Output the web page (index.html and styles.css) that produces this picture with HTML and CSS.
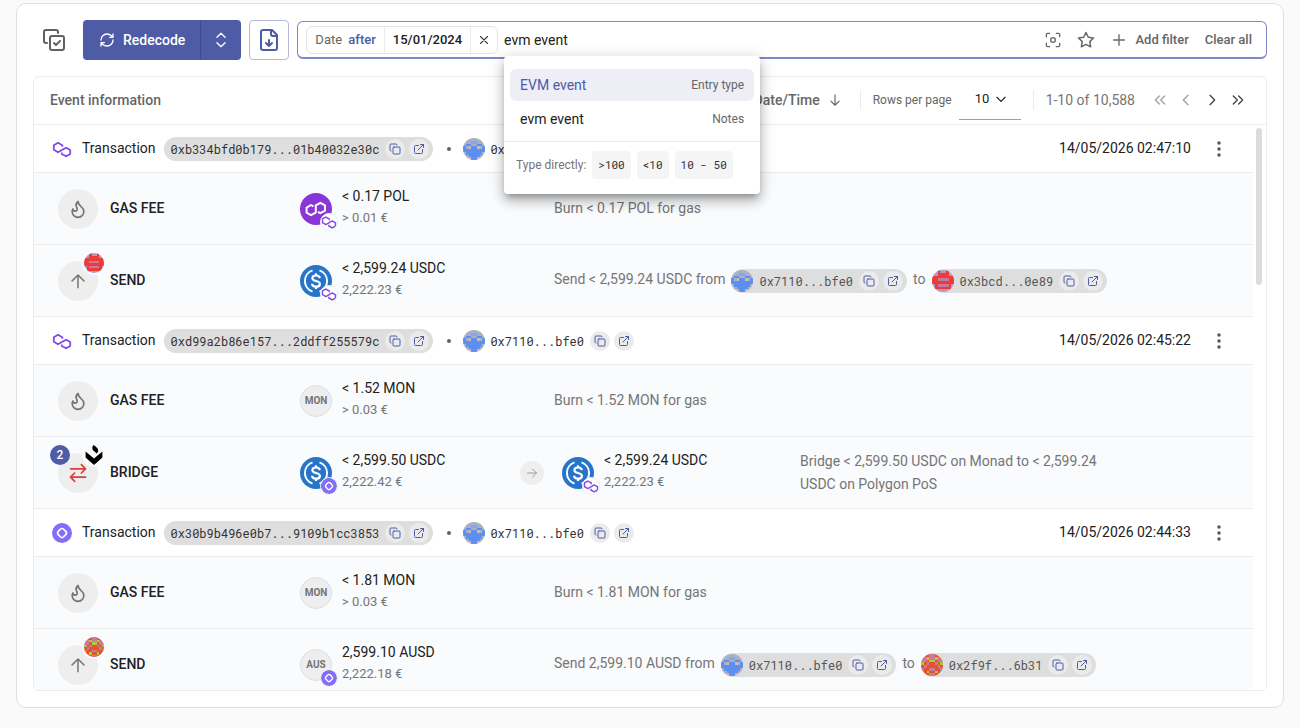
FILE: index.html
```html
<!DOCTYPE html>
<html lang="en">
<head>
<meta charset="utf-8">
<meta name="viewport" content="width=device-width, initial-scale=1">
<title>History events</title>
<link rel="stylesheet" href="styles.css">
</head>
<body>
<svg class="sprite" aria-hidden="true">
  <symbol id="copy" viewBox="0 0 24 24"><rect x="8" y="8" width="14" height="14" rx="2"/><path d="M4 16a2 2 0 0 1-2-2V4a2 2 0 0 1 2-2h10a2 2 0 0 1 2 2"/></symbol>
  <symbol id="link" viewBox="0 0 24 24"><path d="M15 3h6v6M10 14 21 3M19 13v6a2 2 0 0 1-2 2H5a2 2 0 0 1-2-2V7a2 2 0 0 1 2-2h6"/></symbol>
  <symbol id="flame" viewBox="0 0 24 24"><path d="M8.500 14.500A2.500 2.500 0 0 0 11 12c0-1.380-.5-2-1-3-1.072-2.143-.224-4.054 2-6 .5 2.500 2 4.900 4 6.500 2 1.600 3 3.500 3 5.500a7 7 0 1 1-14 0c0-1.153.433-2.294 1-3a2.500 2.500 0 0 0 2.500 2.500z"/></symbol>
  <symbol id="up" viewBox="0 0 24 24"><path d="m4 12 8-8 8 8M12 21V4"/></symbol>
  <symbol id="more" viewBox="0 0 24 24"><g fill="currentColor" stroke="none"><circle cx="12" cy="4" r="2.300"/><circle cx="12" cy="12" r="2.300"/><circle cx="12" cy="20" r="2.300"/></g></symbol>
  <symbol id="polygon" viewBox="0 0 20 20"><path d="M10.300 7.800V6.200L6 3.800 1.800 6.200v4.600L6 13.200l8-4.500 4.200 2.300v4L14 17.300 9.800 15v-1.600" fill="none" stroke="#8247e5" stroke-width="1.800" stroke-linejoin="round"/></symbol>
  <symbol id="monad" viewBox="0 0 20 20"><circle cx="10" cy="10" r="10" fill="#836ef9"/><rect x="6.200" y="6.200" width="7.600" height="7.600" rx="2.300" transform="rotate(45 10 10)" fill="none" stroke="#fff" stroke-width="1.700"/></symbol>
  <symbol id="pol" viewBox="0 0 32 32"><circle cx="16" cy="16" r="16" fill="#8a35d8"/><path d="M13.500 13.400 11 12l-4.400 2.600v5l4.400 2.600 4.800-2.600v-7.200l4.600-2.600 4.600 2.600v5.200l-4.600 2.600-2.400-1.400" fill="none" stroke="#fff" stroke-width="2" stroke-linejoin="round"/></symbol>
  <symbol id="usdc" viewBox="0 0 32 32"><circle cx="16" cy="16" r="16" fill="#2775ca"/><g fill="none" stroke="#fff" stroke-width="2"><path d="M12.500 5.400a11.200 11.200 0 0 0 0 21.200M19.500 5.400a11.200 11.200 0 0 1 0 21.200"/><path d="M19.800 13.200c-.2-1.900-1.600-2.700-3.700-2.700-2.300 0-3.700 1-3.700 2.700 0 3.900 7.500 1.700 7.500 5.700 0 1.800-1.500 2.800-3.900 2.800-2.300 0-3.800-1-3.900-3M16 8.200v2.500M16 21.500v2.600" stroke-width="2.200"/></g></symbol>
  <symbol id="blockie-blue" viewBox="0 0 8 8"><g shape-rendering="crispEdges"><path fill="#aab0c3" d="M0 0h8v8H0z"/><path fill="#5b8ff0" d="M1 2h2v1H1zM5 2h2v1H5zM0 3h1v1H0zM7 3h1v1H7zM3 3h2v1H3zM0 4h8v1H0zM1 5h6v1H1zM2 6h4v1H2zM3 7h2v1H3z"/><path fill="#7fa8f4" d="M3 1h2v1H3z"/><path fill="#dcb4ae" d="M0 6h1v1H0zM7 6h1v1H7zM2 3h1v1H2zM5 3h1v1H5zM1 7h2v1H1zM5 7h2v1H5z"/></g></symbol>
  <symbol id="blockie-red" viewBox="0 0 8 8"><g shape-rendering="crispEdges"><path fill="#ae98d2" d="M0 0h8v8H0z"/><path fill="#ef3b38" d="M2 0h1v1H2zM5 0h1v1H5zM2 1h4v1H2zM0 2h8v1H0zM1 3h1v4H1zM6 3h1v4H6zM0 3h1v2H0zM7 3h1v2H7zM2 4h4v1H2zM2 6h4v1H2z"/><path fill="#ca779c" d="M2 3h4v1H2zM2 5h4v1H2z"/></g></symbol>
  <symbol id="blockie-orange" viewBox="0 0 8 8"><g shape-rendering="crispEdges"><path fill="#e25429" d="M0 0h8v8H0z"/><path fill="#d0799e" d="M3 0h2v2H3zM1 1h1v1H1zM6 1h1v1H6zM0 2h2v1H0zM6 2h2v1H6zM2 3h1v1H2zM5 3h1v1H5zM1 4h1v1H1zM6 4h1v1H6zM3 5h2v1H3zM0 5h1v1H0zM7 5h1v1H7zM3 7h2v1H3z"/><path fill="#a4cf3e" d="M2 1h1v1H2zM5 1h1v1H5zM3 2h2v1H3zM0 3h1v1H0zM7 3h1v1H7zM2 6h1v1H2zM5 6h1v1H5z"/></g></symbol>
</svg>

<main class="card">
  <div class="toolbar">
    <button class="select-toggle" aria-label="Select events"><svg class="i i24" viewBox="0 0 24 24"><rect x="8" y="8" width="14" height="14" rx="2"/><path d="M5 15H4a2 2 0 0 1-2-2V4a2 2 0 0 1 2-2h10a2 2 0 0 1 2 2v1M12 15l2 2 4-4"/></svg></button>
    <div class="split">
      <button class="split-main"><svg class="i i16" viewBox="0 0 24 24"><path d="M3 12a9 9 0 0 1 9-9 9.750 9.750 0 0 1 6.740 2.740L21 8M21 3v5h-5M21 12a9 9 0 0 1-9 9 9.750 9.750 0 0 1-6.740-2.740L3 16M8 16H3v5"/></svg>Redecode</button>
      <button class="split-more" aria-label="More decode options"><svg class="i i16" viewBox="0 0 24 24"><path d="m6 16 6 6 6-6M6 8l6-6 6 6"/></svg></button>
    </div>
    <button class="export" aria-label="Export"><svg class="i i24" viewBox="0 0 24 24"><path d="M15 2H6a2 2 0 0 0-2 2v16a2 2 0 0 0 2 2h12a2 2 0 0 0 2-2V7zM14 2v4a2 2 0 0 0 2 2h4M12 18v-6M9 15l3 3 3-3"/></svg></button>

    <div class="filter">
      <div class="chip">
        <span class="chip-key">Date <b>after</b></span>
        <span class="chip-value">15/01/2024</span>
        <button class="chip-remove" aria-label="Remove filter"><svg class="i i14" viewBox="0 0 24 24"><path d="M18 6 6 18M6 6l12 12"/></svg></button>
      </div>
      <div class="search">
        <input type="text" value="evm event" aria-label="Filter events">
        <div class="menu">
          <div class="options" role="listbox" aria-label="Suggestions">
            <button class="option active" role="option" aria-selected="true"><span>EVM event</span><small>Entry type</small></button>
            <button class="option" role="option" aria-selected="false"><span>evm event</span><small>Notes</small></button>
          </div>
          <div class="hint"><span>Type directly:</span><kbd>&gt;100</kbd><kbd>&lt;10</kbd><kbd>10 - 50</kbd></div>
        </div>
      </div>
      <button class="tool" aria-label="Match exactly"><svg class="i i16" viewBox="0 0 24 24"><circle cx="12" cy="12" r="3.500"/><path d="M2 7V4a2 2 0 0 1 2-2h3M17 2h3a2 2 0 0 1 2 2v3M22 17v3a2 2 0 0 1-2 2h-3M7 22H4a2 2 0 0 1-2-2v-3"/></svg></button>
      <button class="tool" aria-label="Saved filters"><svg class="i i18" viewBox="0 0 24 24"><path d="m12 2 3.100 6.300 6.900 1-5 4.900 1.200 6.900L12 17.800l-6.200 3.300L7 14.200 2 9.300l6.900-1z"/></svg></button>
      <button class="tool add"><svg class="i i16" viewBox="0 0 24 24"><path d="M4 12h16M12 4v16"/></svg>Add filter</button>
      <button class="tool">Clear all</button>
    </div>
  </div>

  <section class="events">
    <header class="head">
      <h2>Event information</h2>
      <button class="sort">Date/Time<svg class="i i14" viewBox="0 0 24 24"><path d="M12 3v18M5 14l7 7 7-7"/></svg></button>
      <div class="pager">
        <label for="rows">Rows per page</label>
        <span class="rows"><select id="rows"><option>10</option></select><svg class="i i14" viewBox="0 0 24 24"><path d="m5 9 7 7 7-7"/></svg></span>
        <span class="range">1-10 of 10,588</span>
        <nav class="pages" aria-label="Pages">
          <button disabled aria-label="First page"><svg class="i i16" viewBox="0 0 24 24"><path d="m11 18-6-6 6-6M19 18l-6-6 6-6"/></svg></button>
          <button disabled aria-label="Previous page"><svg class="i i16" viewBox="0 0 24 24"><path d="m15 19-7-7 7-7"/></svg></button>
          <button aria-label="Next page"><svg class="i i16" viewBox="0 0 24 24"><path d="m9 19 7-7-7-7"/></svg></button>
          <button aria-label="Last page"><svg class="i i16" viewBox="0 0 24 24"><path d="m5 18 6-6-6-6M13 18l6-6-6-6"/></svg></button>
        </nav>
      </div>
    </header>

    <div class="scroll">
      <table aria-label="Events">
        <colgroup><col class="c-event"><col class="c-asset"><col class="c-note"><col></colgroup>
        <tbody>
          <tr class="tx">
            <td colspan="3"><div class="tx-line">
              <svg class="chain"><use href="#polygon"/></svg><span class="tx-label">Transaction</span>
              <span class="address hash"><code>0xb334bfd0b179...01b40032e30c</code><button aria-label="Copy"><svg class="i i12"><use href="#copy"/></svg></button><a href="#tx1" aria-label="Open"><svg class="i i12"><use href="#link"/></svg></a></span>
              <span class="dot"></span>
              <span class="address plain"><svg class="blockie"><use href="#blockie-blue"/></svg><code>0x7110...bfe0</code><button aria-label="Copy"><svg class="i i12"><use href="#copy"/></svg></button><a href="#a1" aria-label="Open"><svg class="i i12"><use href="#link"/></svg></a></span>
            </div></td>
            <td><div class="tx-end"><time>14/05/2026 02:47:10</time><button class="more" aria-label="Actions"><svg class="i i18"><use href="#more"/></svg></button></div></td>
          </tr>
          <tr class="ev">
            <td><div class="event"><span class="disc"><svg class="i i20"><use href="#flame"/></svg></span><span class="name">GAS FEE</span></div></td>
            <td><div class="asset"><span class="coin"><svg class="coin-img"><use href="#pol"/></svg><svg class="net light"><use href="#polygon"/></svg></span><span class="amount">&lt; 0.17 POL<small>&gt; 0.01 €</small></span></div></td>
            <td colspan="2"><p class="note">Burn &lt; 0.17 POL for gas</p></td>
          </tr>
          <tr class="ev">
            <td><div class="event"><span class="disc"><svg class="i i18"><use href="#up"/></svg><svg class="party"><use href="#blockie-red"/></svg></span><span class="name">SEND</span></div></td>
            <td><div class="asset"><span class="coin"><svg class="coin-img"><use href="#usdc"/></svg><svg class="net light"><use href="#polygon"/></svg></span><span class="amount">&lt; 2,599.24 USDC<small>2,222.23 €</small></span></div></td>
            <td colspan="2"><p class="note flow"><span class="word">Send &lt; 2,599.24 USDC from</span>
              <span class="address"><svg class="blockie"><use href="#blockie-blue"/></svg><code>0x7110...bfe0</code><button aria-label="Copy"><svg class="i i12"><use href="#copy"/></svg></button><a href="#a1" aria-label="Open"><svg class="i i12"><use href="#link"/></svg></a></span> <span class="word">to</span>
              <span class="address"><svg class="blockie"><use href="#blockie-red"/></svg><code>0x3bcd...0e89</code><button aria-label="Copy"><svg class="i i12"><use href="#copy"/></svg></button><a href="#a2" aria-label="Open"><svg class="i i12"><use href="#link"/></svg></a></span></p></td>
          </tr>

          <tr class="tx">
            <td colspan="3"><div class="tx-line">
              <svg class="chain"><use href="#polygon"/></svg><span class="tx-label">Transaction</span>
              <span class="address hash"><code>0xd99a2b86e157...2ddff255579c</code><button aria-label="Copy"><svg class="i i12"><use href="#copy"/></svg></button><a href="#tx2" aria-label="Open"><svg class="i i12"><use href="#link"/></svg></a></span>
              <span class="dot"></span>
              <span class="address plain"><svg class="blockie"><use href="#blockie-blue"/></svg><code>0x7110...bfe0</code><button aria-label="Copy"><svg class="i i12"><use href="#copy"/></svg></button><a href="#a1" aria-label="Open"><svg class="i i12"><use href="#link"/></svg></a></span>
            </div></td>
            <td><div class="tx-end"><time>14/05/2026 02:45:22</time><button class="more" aria-label="Actions"><svg class="i i18"><use href="#more"/></svg></button></div></td>
          </tr>
          <tr class="ev">
            <td><div class="event"><span class="disc"><svg class="i i20"><use href="#flame"/></svg></span><span class="name">GAS FEE</span></div></td>
            <td><div class="asset"><span class="coin text">MON</span><span class="amount">&lt; 1.52 MON<small>&gt; 0.03 €</small></span></div></td>
            <td colspan="2"><p class="note">Burn &lt; 1.52 MON for gas</p></td>
          </tr>
          <tr class="ev">
            <td><div class="event"><span class="disc swap"><svg class="i i20" viewBox="0 0 24 24"><path d="M3 7h18M16 2l5 5-5 5M21 17H3M8 12l-5 5 5 5"/></svg><span class="count">2</span><svg class="party protocol" viewBox="0 0 20 20"><path d="M9.400 0c2.200 1.400 4.800 3.200 4.800 5.400 0 1.400-.8 2.200-1.800 3-.8-1.600-3.900-2.600-4.100-4.900C8.200 2.200 8.700 1 9.400 0zM1.600 6.400 10 13.400l8.400-7v6L10 20l-8.400-7.600z" fill="#000"/></svg></span><span class="name">BRIDGE</span></div></td>
            <td colspan="2"><div class="bridge">
              <div class="asset"><span class="coin"><svg class="coin-img"><use href="#usdc"/></svg><svg class="net"><use href="#monad"/></svg></span><span class="amount">&lt; 2,599.50 USDC<small>2,222.42 €</small></span></div>
              <span class="to"><svg class="i i12" viewBox="0 0 24 24"><path d="M3 12h18M13 4l8 8-8 8"/></svg></span>
              <div class="asset"><span class="coin"><svg class="coin-img"><use href="#usdc"/></svg><svg class="net light"><use href="#polygon"/></svg></span><span class="amount">&lt; 2,599.24 USDC<small>2,222.23 €</small></span></div>
            </div></td>
            <td><p class="note wrap">Bridge &lt; 2,599.50 USDC on Monad to &lt; 2,599.24 USDC on Polygon PoS</p></td>
          </tr>

          <tr class="tx">
            <td colspan="3"><div class="tx-line">
              <svg class="chain"><use href="#monad"/></svg><span class="tx-label">Transaction</span>
              <span class="address hash"><code>0x30b9b496e0b7...9109b1cc3853</code><button aria-label="Copy"><svg class="i i12"><use href="#copy"/></svg></button><a href="#tx3" aria-label="Open"><svg class="i i12"><use href="#link"/></svg></a></span>
              <span class="dot"></span>
              <span class="address plain"><svg class="blockie"><use href="#blockie-blue"/></svg><code>0x7110...bfe0</code><button aria-label="Copy"><svg class="i i12"><use href="#copy"/></svg></button><a href="#a1" aria-label="Open"><svg class="i i12"><use href="#link"/></svg></a></span>
            </div></td>
            <td><div class="tx-end"><time>14/05/2026 02:44:33</time><button class="more" aria-label="Actions"><svg class="i i18"><use href="#more"/></svg></button></div></td>
          </tr>
          <tr class="ev">
            <td><div class="event"><span class="disc"><svg class="i i20"><use href="#flame"/></svg></span><span class="name">GAS FEE</span></div></td>
            <td><div class="asset"><span class="coin text">MON</span><span class="amount">&lt; 1.81 MON<small>&gt; 0.03 €</small></span></div></td>
            <td colspan="2"><p class="note">Burn &lt; 1.81 MON for gas</p></td>
          </tr>
          <tr class="ev">
            <td><div class="event"><span class="disc"><svg class="i i18"><use href="#up"/></svg><svg class="party"><use href="#blockie-orange"/></svg></span><span class="name">SEND</span></div></td>
            <td><div class="asset"><span class="coin text">AUS<svg class="net"><use href="#monad"/></svg></span><span class="amount">2,599.10 AUSD<small>2,222.18 €</small></span></div></td>
            <td colspan="2"><p class="note flow"><span class="word">Send 2,599.10 AUSD from</span>
              <span class="address"><svg class="blockie"><use href="#blockie-blue"/></svg><code>0x7110...bfe0</code><button aria-label="Copy"><svg class="i i12"><use href="#copy"/></svg></button><a href="#a1" aria-label="Open"><svg class="i i12"><use href="#link"/></svg></a></span> <span class="word">to</span>
              <span class="address"><svg class="blockie"><use href="#blockie-orange"/></svg><code>0x2f9f...6b31</code><button aria-label="Copy"><svg class="i i12"><use href="#copy"/></svg></button><a href="#a3" aria-label="Open"><svg class="i i12"><use href="#link"/></svg></a></span></p></td>
          </tr>
        </tbody>
      </table>
      <div class="track"><div class="thumb"></div></div>
    </div>
  </section>
</main>
</body>
</html>
```
FILE: styles.css
```css
:root {
  --primary: #4e5ba6;
  --text: #212121;
  --muted: #666;
  --soft: #757575;
  --line: #ececec;
  --mono: "Roboto Mono", "DejaVu Sans Mono", monospace;
}
* { box-sizing: border-box; }
body {
  margin: 0;
  padding: 3px 16px 20px;
  height: 100vh;
  display: flex;
  background: #fafafa;
  color: var(--text);
  font: 14px/20px Roboto, sans-serif;
}
button, input, select { font: inherit; color: inherit; background: none; border: 0; padding: 0; margin: 0; }
button { display: inline-flex; align-items: center; justify-content: center; }
small { font-size: inherit; }
.sprite { position: absolute; width: 0; height: 0; }
.i { display: block; flex: none; fill: none; stroke: currentColor; stroke-width: 2; stroke-linecap: round; stroke-linejoin: round; }
.i12 { width: 12px; height: 12px; }
.i14 { width: 14px; height: 14px; }
.i16 { width: 16px; height: 16px; }
.i18 { width: 18px; height: 18px; }
.i20 { width: 20px; height: 20px; }
.i24 { width: 24px; height: 24px; }

.card { flex: 1; min-width: 0; display: flex; flex-direction: column; gap: 16px; padding: 16px; background: #fff; border: 1px solid #e0e0e0; border-radius: 10px; }

.toolbar { display: flex; align-items: center; gap: 8px; }
.select-toggle { width: 42px; height: 40px; color: #616161; }
.split { display: flex; height: 40px; border-radius: 4px; overflow: hidden; background: var(--primary); color: #fff; font-weight: 500; }
.split-main { gap: 8px; padding: 0 15px 0 16px; }
.split-more { width: 41px; border-left: 1px solid #3f4a8c; }
.export { width: 40px; height: 40px; border: 1px solid #b4b9da; border-radius: 4px; color: var(--primary); }

.filter { flex: 1; min-width: 0; display: flex; align-items: center; height: 38px; padding: 0 14px 0 8px; border: 1px solid #7f88c0; border-bottom-width: 2px; border-radius: 6px; }
.chip { display: flex; height: 28px; border: 1px solid #e4e4e4; border-radius: 6px; font-size: 13px; line-height: 26px; margin-right: 6px; }
.chip-key { padding: 0 8px; color: var(--muted); }
.chip-key b { font-weight: 500; color: var(--primary); margin-left: 3px; }
.chip-value { padding: 0 8px; border: solid #ececec; border-width: 0 1px; font-weight: 500; }
.chip-remove { width: 26px; color: #424242; }
.search { position: relative; flex: 1; height: 28px; }
.search input { width: 100%; height: 28px; outline: 0; }
.tool { height: 28px; padding: 0 8px; color: var(--muted); font-weight: 500; font-size: 13px; }
.tool:last-child { padding-right: 0; }
.add { gap: 8px; }

.menu { position: absolute; z-index: 2; top: 30px; left: 0; width: 256px; background: #fff; border-radius: 4px; box-shadow: 0 5px 6px -3px rgba(0,0,0,.3), 0 8px 12px 1px rgba(0,0,0,.16), 0 2px 16px 2px rgba(0,0,0,.12); }
.options { display: grid; gap: 2px; padding: 13px 6px 6px; border-bottom: 1px solid #ebebeb; }
.option { justify-content: space-between; height: 32px; padding: 0 10px; border-radius: 6px; }
.option small { font-size: 12px; color: var(--muted); }
.active { background: #edeef6; }
.active span { color: var(--primary); }
.hint { display: flex; align-items: center; gap: 6px; padding: 9px 12px 15px; font-size: 12px; color: var(--soft); white-space: nowrap; }
kbd { padding: 0 6px; border-radius: 4px; background: #f5f5f5; color: #333; font: 11px/28px var(--mono); }

.events { flex: 1; min-height: 0; display: flex; flex-direction: column; overflow: hidden; border: 1px solid var(--line); border-radius: 6px; }
.head { display: flex; align-items: center; height: 48px; flex: none; padding: 0 16px 2px; border-bottom: 1px solid var(--line); color: var(--muted); font-weight: 500; }
h2 { margin: 0; font: inherit; }
.sort { margin-left: auto; gap: 8px; }
.pager { display: flex; align-items: center; font-weight: 400; }
.pager label { margin-left: 18px; padding-left: 12px; border-left: 1px solid var(--line); font-size: 12px; }
.rows { display: flex; align-items: center; width: 62px; height: 40px; margin: 0 12px 0 7px; padding: 0 13px 0 16px; border-bottom: 1px solid #9e9e9e; color: var(--text); }
.rows select { flex: 1; min-width: 0; appearance: none; font-size: 13px; }
.range { padding: 0 13px 0 12px; border-left: 1px solid var(--line); color: var(--soft); }
.pages { display: flex; gap: 2px; }
.pages button { width: 24px; height: 24px; color: #424242; }
.pages button:disabled { color: #a0a0a0; }

.scroll { display: flex; min-height: 0; flex: 1; overflow: hidden; background: #fff; }
table { flex: 1; width: 100%; table-layout: fixed; border-spacing: 0; }
.c-event { width: 266px; }
.c-asset { width: 254px; }
.c-note { width: 246px; }
td { padding: 0; border-bottom: 1px solid var(--line); white-space: nowrap; }
.tx td { height: 48px; }
.ev td { height: 72px; background: #fafbfd; }
.track { flex: 0 0 13px; padding: 3px; }
.thumb { width: 6px; height: 28%; border-radius: 3px; background: #dcdcdc; }

.tx-line { display: flex; align-items: center; padding-left: 18px; }
.chain { width: 20px; height: 20px; }
.tx-label { margin: 0 8px 0 10px; padding-bottom: 2px; }
.dot { width: 4px; height: 4px; margin: 0 12px 0 14px; border-radius: 50%; background: #616161; }
.tx-end { display: flex; align-items: center; justify-content: flex-end; gap: 16px; padding-right: 22px; }
.tx-end time { padding-bottom: 2px; }
.more { width: 24px; height: 24px; color: #555; }

.address { display: inline-flex; align-items: center; height: 24px; gap: 4px; padding-right: 4px; border-radius: 12px; background: #dedede; color: #555; }
.address code { padding: 0 2px 0 1px; font: 12px/24px var(--mono); }
.address button, .address a { display: flex; align-items: center; justify-content: center; width: 20px; height: 20px; border-radius: 50%; background: #ebebeb; color: var(--primary); }
.hash { padding-left: 6px; color: #333; }
.plain { background: none; color: #333; }
.blockie { width: 22px; height: 22px; border-radius: 50%; }

.event { display: flex; align-items: center; gap: 12px; padding-left: 24px; font-weight: 500; }
.name { padding-bottom: 2px; }
.disc { position: relative; display: grid; place-items: center; width: 40px; height: 40px; border-radius: 50%; background: #eee; color: #757575; }
.swap { color: #d8403c; }
.party { position: absolute; top: -10px; right: -8px; width: 24px; height: 24px; border: 2px solid #fafbfd; border-radius: 50%; background: #fafbfd; }
.count { position: absolute; top: -8px; left: -8px; width: 20px; height: 20px; border-radius: 50%; background: var(--primary); color: #fff; font-size: 12px; text-align: center; }

.asset { display: flex; align-items: center; gap: 10px; }
.coin { position: relative; flex: none; width: 32px; height: 32px; border-radius: 50%; }
.coin-img { display: block; width: 32px; height: 32px; }
.text { display: grid; place-items: center; border: 1px solid #dedede; background: #eee; color: var(--soft); font-size: 10px; font-weight: 700; }
.net { position: absolute; left: 20px; top: 20px; width: 18px; height: 18px; border: 1px solid #eee; border-radius: 50%; }
.text .net { left: 19px; top: 19px; }
.light { background: #fff; }
.amount { padding-bottom: 4px; line-height: 22px; }
.amount small { display: block; color: var(--soft); font-size: 13px; }
.bridge { display: flex; align-items: center; }
.bridge .asset:first-child { width: 220px; }
.to { display: grid; place-items: center; width: 24px; height: 24px; margin-right: 18px; border-radius: 50%; background: #eee; color: #9e9e9e; }
.note { margin: 0; padding-bottom: 2px; color: var(--soft); }
.flow { display: flex; align-items: center; gap: 6px; padding-bottom: 0; }
.word { padding-bottom: 4px; }
.flow code { padding-left: 2px; }
.wrap { max-width: 320px; padding: 0; line-height: 23px; white-space: normal; }
```
